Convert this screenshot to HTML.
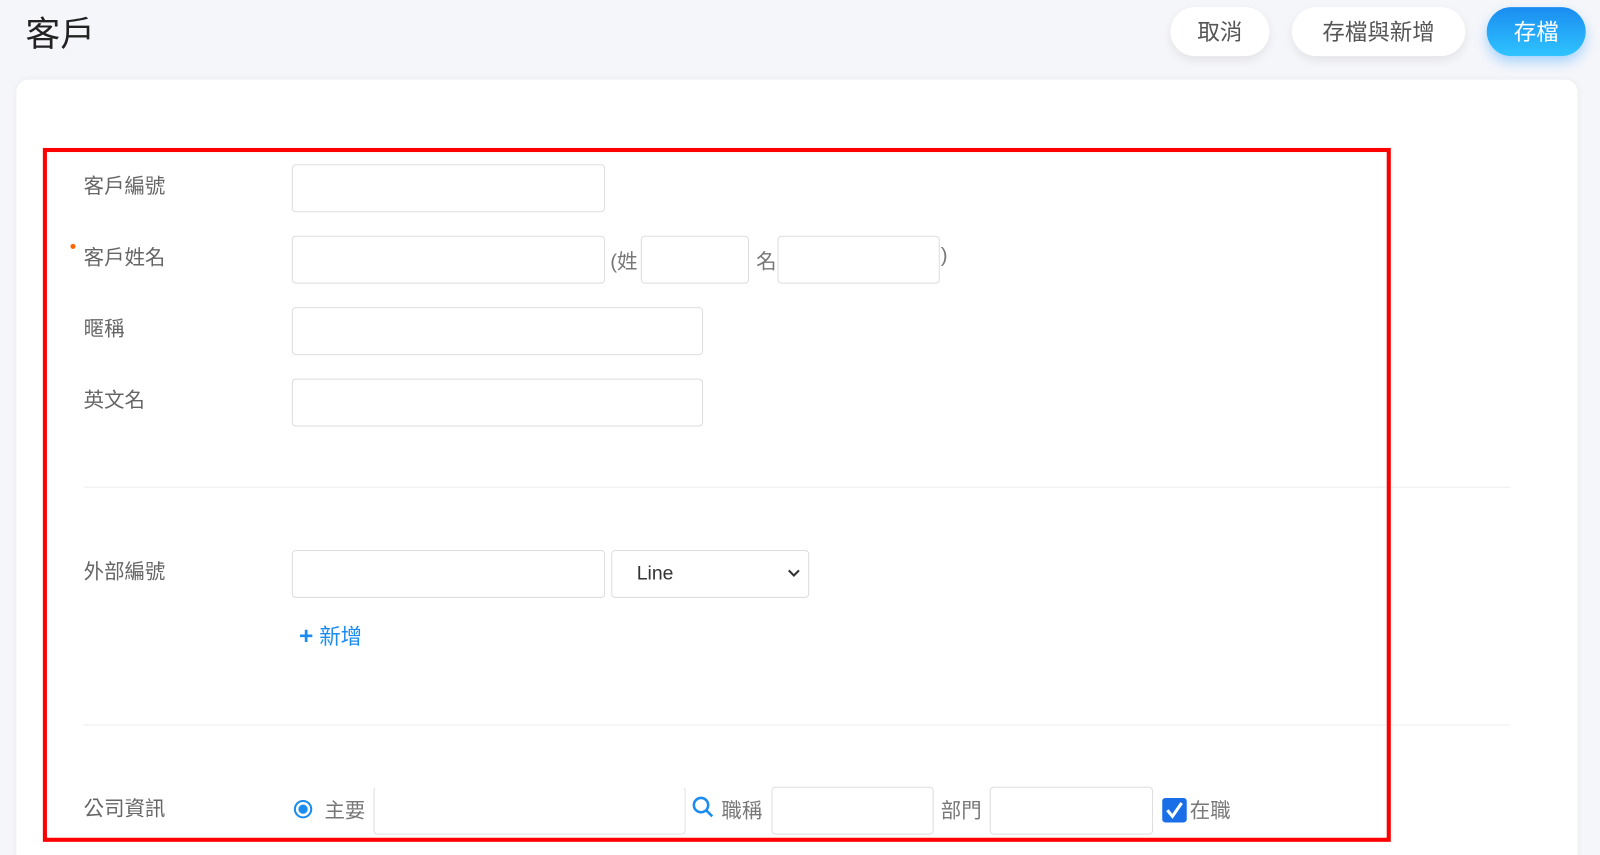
<!DOCTYPE html>
<html><head><meta charset="utf-8"><style>
*{box-sizing:border-box;margin:0;padding:0}
html,body{width:1600px;height:855px;overflow:hidden}
body{background:#f5f6fa;font-family:"Liberation Sans","Noto Sans CJK TC",sans-serif;position:relative}
#w{position:absolute;left:0;top:0;width:1568px;height:838px;transform:scale(1.0204);transform-origin:0 0}
.a{position:absolute}
.title{left:25px;top:6px;font-size:34px;color:#222}
.btn{top:7px;height:48px;border-radius:24px;background:#fff;box-shadow:0 4px 10px rgba(0,0,0,.08);font-size:22px;color:#555;display:flex;align-items:center;justify-content:center;padding-bottom:3px}
.card{left:16px;top:78px;width:1530px;height:800px;background:#fff;border-radius:12px;box-shadow:0 0 6px rgba(0,0,0,.05)}
.red{left:42px;top:145px;width:1321px;height:680px;border:4px solid #f00}
.lb{left:82px;font-size:20px;color:#666}
.in{border:1px solid #ddd;border-radius:4px;height:47px;background:#fff}
.t{font-size:20px;color:#777}
.hr{left:82px;width:1398px;height:1px;background:#eee}
</style></head><body><div id="w">
<div class="a title">客戶</div>
<div class="a btn" style="left:1147px;width:97px">取消</div>
<div class="a btn" style="left:1266px;width:170px">存檔與新增</div>
<div class="a btn" style="left:1457px;width:97px;background:linear-gradient(#1a8cf0,#2fc4ff);color:#fff;box-shadow:0 6px 12px rgba(30,150,255,.35)">存檔</div>
<div class="a card"></div>
<div class="a lb" style="top:166px">客戶編號</div>
<div class="a in" style="left:286px;top:161px;width:307px"></div>
<div class="a" style="left:69px;top:239px;width:5px;height:5px;border-radius:50%;background:#f60"></div>
<div class="a lb" style="top:236px">客戶姓名</div>
<div class="a in" style="left:286px;top:231px;width:307px"></div>
<div class="a t" style="left:598px;top:240px">(姓</div>
<div class="a in" style="left:628px;top:231px;width:106px"></div>
<div class="a t" style="left:741px;top:240px">名</div>
<div class="a in" style="left:762px;top:231px;width:159px"></div>
<div class="a t" style="left:922px;top:240px">)</div>
<div class="a lb" style="top:306px">暱稱</div>
<div class="a in" style="left:286px;top:301px;width:403px"></div>
<div class="a lb" style="top:376px">英文名</div>
<div class="a in" style="left:286px;top:371px;width:403px"></div>
<div class="a hr" style="top:477px"></div>
<div class="a lb" style="top:544px">外部編號</div>
<div class="a in" style="left:286px;top:539px;width:307px"></div>
<div class="a in" style="left:599px;top:539px;width:194px;font-size:19px;color:#333;padding:12px 0 0 24px">Line</div>
<svg class="a" style="left:771px;top:557px" width="14" height="10"><path d="M2 2l5 5 5-5" stroke="#333" stroke-width="2" fill="none"/></svg>
<div class="a" style="left:293px;top:608px;font-size:21px;color:#1a8cf0"><b style="font-size:24px">+</b> 新增</div>
<div class="a hr" style="top:710px"></div>
<div class="a lb" style="top:776px">公司資訊</div>
<div class="a" style="left:288px;top:784px;width:18px;height:18px;border-radius:50%;border:2px solid #1a8cf0;background:radial-gradient(#1a8cf0 4px,#fff 5px)"></div>
<div class="a t" style="left:318px;top:778px">主要</div>
<div class="a in" style="left:366px;top:771px;width:306px;border-top-color:#fff"></div>
<svg class="a" style="left:678px;top:780px" width="22" height="22"><circle cx="9" cy="9" r="7" stroke="#1a8cf0" stroke-width="2.5" fill="none"/><path d="M14 14l6 6" stroke="#1a8cf0" stroke-width="2.5"/></svg>
<div class="a t" style="left:707px;top:778px">職稱</div>
<div class="a in" style="left:756px;top:771px;width:159px"></div>
<div class="a t" style="left:922px;top:778px">部門</div>
<div class="a in" style="left:970px;top:771px;width:160px"></div>
<div class="a" style="left:1139px;top:782px;width:24px;height:24px;border-radius:3px;background:#1a6fe8"></div>
<svg class="a" style="left:1139px;top:782px" width="24" height="24"><path d="M5 12l5 6 9-13" stroke="#fff" stroke-width="3" fill="none"/></svg>
<div class="a t" style="left:1166px;top:778px">在職</div>
<div class="a red"></div>
</div></body></html>
